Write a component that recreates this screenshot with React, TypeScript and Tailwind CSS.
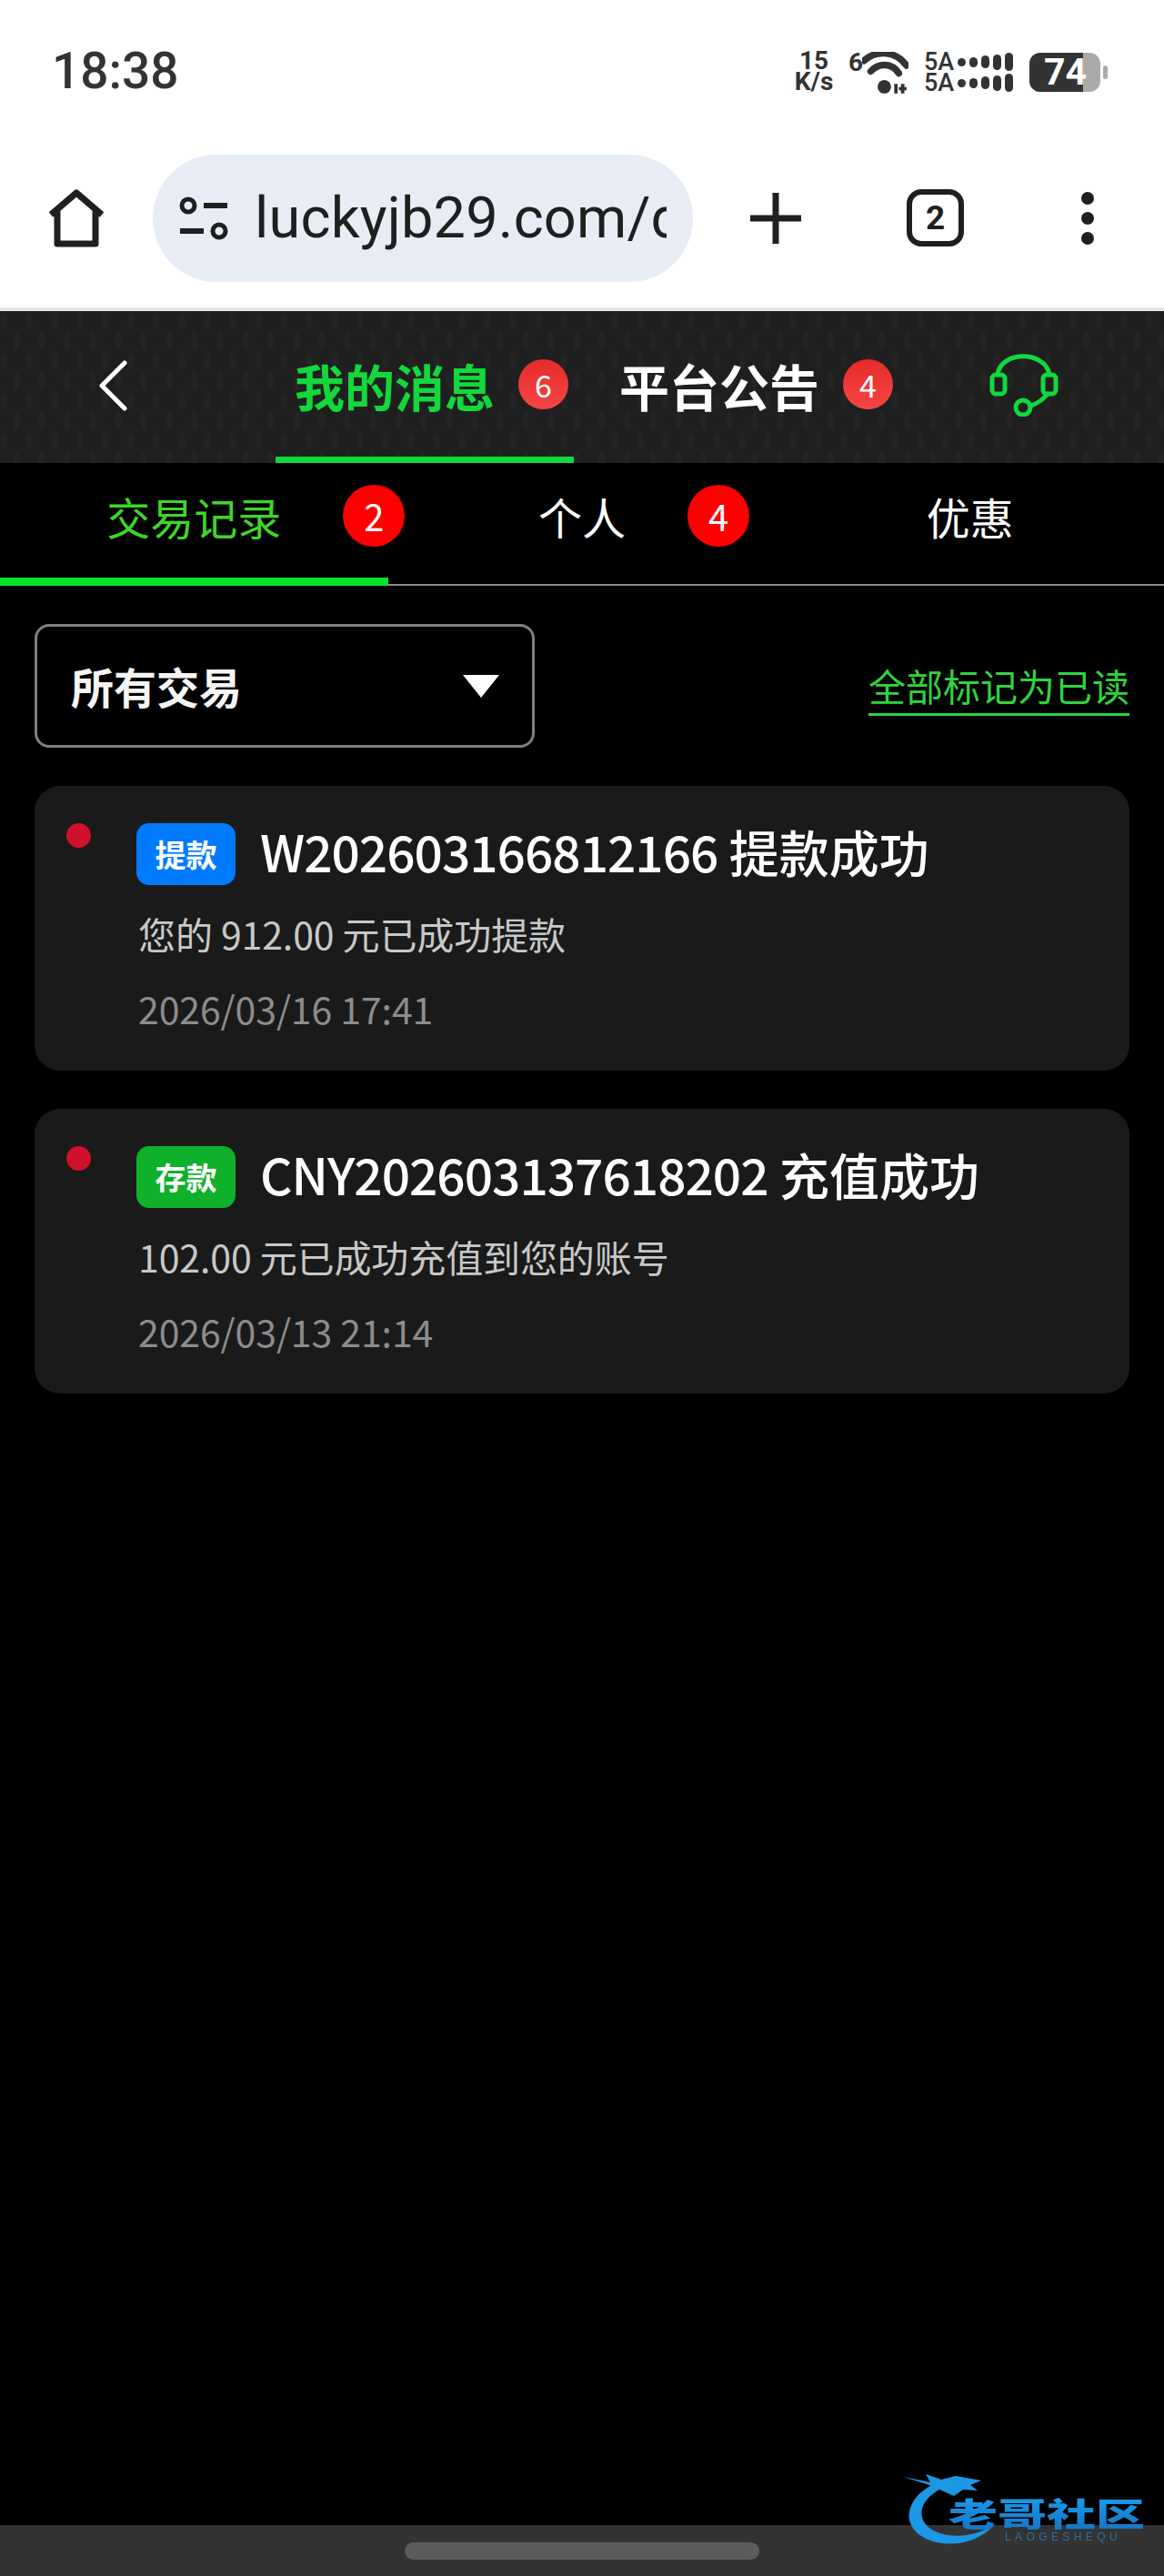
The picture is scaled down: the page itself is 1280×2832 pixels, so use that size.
import React from 'react';

const StatusBar = () => (
  <div className="h-[170px] bg-white flex items-start pt-[50px] pl-[57px] pr-[62px] justify-between text-[#333333]">
    <span className="font-['Roboto',sans-serif] font-medium text-[55px] leading-[56px]">18:38</span>
    <div className="flex items-start font-['Roboto',sans-serif] font-bold">
      <div className="w-[48px] flex flex-col items-center mt-[5px] text-[28px] leading-[23px]">
        <span>15</span>
        <span>K/s</span>
      </div>
      <div className="relative ml-[14px] w-[66px] h-[48px] mt-[6px]">
        <span className="absolute left-0 top-[0px] text-[28px] leading-[26px]">6</span>
        <svg viewBox="0 0 48 44" className="absolute left-[15px] top-[1px] w-[51px] h-[47px]" fill="none" stroke="#333333" strokeLinecap="round">
          <path d="M2 9 C 14 -2, 34 -2, 46 14" strokeWidth="7" />
          <path d="M9 20 C 17 11, 31 11, 38 22" strokeWidth="7" />
          <circle cx="23" cy="36" r="7" fill="#333333" stroke="none" />
          <path d="M35 43 V33 M42 33 V43 M38 38 L46 38" strokeWidth="3.5" strokeLinecap="butt" />
        </svg>
      </div>
      <div className="ml-[17px] flex flex-col gap-[1px] mt-[7px]">
        {[0, 1].map((row) => (
          <div key={row} className="flex items-center h-[22px]">
            <span className="text-[27px] leading-[22px] w-[37px] font-medium">5A</span>
            <div className="flex items-center gap-[4px]">
              <div className="w-[9px] h-[9px] rounded-full bg-[#333333]" />
              <div className="w-[9px] h-[11px] rounded-full bg-[#333333]" />
              <div className="w-[9px] h-[14px] rounded-full bg-[#333333]" />
              <div className="w-[9px] h-[17px] rounded-full bg-[#333333]" />
              <div className="w-[9px] h-[20px] rounded-full bg-[#333333]" />
            </div>
          </div>
        ))}
      </div>
      <div className="ml-[18px] mt-[8px] flex items-center">
        <div className="relative w-[78px] h-[43px] rounded-[12px] bg-[#aaaaaa]">
          <div className="w-[59px] h-full rounded-l-[12px] bg-[#333333]" />
          <span className="absolute left-[16px] top-0 text-[41px] leading-[43px] font-bold text-white">74</span>
        </div>
        <div className="ml-[3px] w-[5px] h-[15px] rounded-full bg-[#aaaaaa]" />
      </div>
    </div>
  </div>
);

const Toolbar = () => (
  <div className="h-[172px] bg-white border-b-[4px] border-[#e2e7ec] flex items-start">
    <svg viewBox="0 0 64 64" className="ml-[52px] mt-[38px] w-[64px] h-[64px] shrink-0" fill="none" stroke="#1f1f1f" strokeWidth="7" strokeLinejoin="round">
      <path d="M4 28 L32 4 L60 28 M11 23 V60 H53 V23" />
    </svg>
    <div className="ml-[52px] w-[594px] h-[140px] rounded-full bg-[#e8edf5] flex items-center pl-[29px] shrink-0">
      <svg viewBox="0 0 54 48" className="w-[54px] h-[48px] shrink-0" fill="none" stroke="#1f1f1f">
        <circle cx="10" cy="10" r="7" strokeWidth="5" />
        <path d="M27 10 H53" strokeWidth="6" />
        <circle cx="44" cy="38" r="7" strokeWidth="5" />
        <path d="M1 38 H27" strokeWidth="6" />
      </svg>
      <div className="ml-[29px] w-[453px] overflow-hidden whitespace-nowrap font-['Roboto',sans-serif] text-[63px] leading-[80px] tracking-[0.2px] text-[#1f1f1f]">
        luckyjb29.com/dashboard
      </div>
    </div>
    <svg viewBox="0 0 56 56" className="ml-[63px] mt-[42px] w-[56px] h-[56px] shrink-0" stroke="#1f1f1f" strokeWidth="7">
      <path d="M0 28 H56 M28 0 V56" />
    </svg>
    <div className="ml-[116px] mt-[38px] w-[63px] h-[63px] rounded-[16px] border-[6px] border-[#1f1f1f] flex items-center justify-center font-['Roboto',sans-serif] font-bold text-[37px] leading-none text-[#1f1f1f] shrink-0">
      2
    </div>
    <div className="ml-[129px] mt-[41px] flex flex-col gap-[8px] shrink-0">
      <div className="w-[14px] h-[14px] rounded-full bg-[#1f1f1f]" />
      <div className="w-[14px] h-[14px] rounded-full bg-[#1f1f1f]" />
      <div className="w-[14px] h-[14px] rounded-full bg-[#1f1f1f]" />
    </div>
  </div>
);

const Header = () => (
  <div className="h-[167px] flex items-stretch bg-[#1f1f1f] bg-[radial-gradient(ellipse_4px_11px_at_4px_11px,#242424_80%,transparent_100%),radial-gradient(ellipse_4px_11px_at_18px_33px,#242424_80%,transparent_100%)] bg-[length:28px_44px]">
    <div className="w-[303px] flex items-center pl-[108px] pb-[3px] shrink-0">
      <svg viewBox="0 0 32 56" className="w-[32px] h-[56px]" fill="none" stroke="#ffffff" strokeWidth="5" strokeLinecap="round" strokeLinejoin="round">
        <path d="M29 3 L4 28 L29 53" />
      </svg>
    </div>
    <div className="w-[328px] border-b-[7px] border-[#0fdc3a] flex items-center pl-[21px] pt-[1px] shrink-0">
      <span className="text-[55px] leading-[70px] font-bold text-[#12d83c]">我的消息</span>
      <span className="ml-[26px] w-[55px] h-[55px] rounded-full bg-gradient-to-b from-[#e62a2a] to-[#f54545] flex items-center justify-center text-[34px] leading-none text-white">6</span>
    </div>
    <div className="flex items-center pl-[50px] border-b-[7px] border-transparent pt-[1px] shrink-0">
      <span className="text-[55px] leading-[70px] font-bold text-white">平台公告</span>
      <span className="ml-[26px] w-[55px] h-[55px] rounded-full bg-gradient-to-b from-[#e62a2a] to-[#f54545] flex items-center justify-center text-[34px] leading-none text-white">4</span>
    </div>
    <div className="flex items-center ml-[106px] pb-[6px]">
      <svg viewBox="0 0 76 70" className="w-[76px] h-[70px]" fill="none" stroke="#12d83c" strokeWidth="5" strokeLinecap="round">
        <path d="M9 24 C 12 -3, 62 -3, 66 24" />
        <rect x="3" y="24" width="14" height="21" rx="4" />
        <rect x="59" y="24" width="14" height="21" rx="4" />
        <circle cx="37" cy="60" r="8" />
        <path d="M45 58 C 53 56, 59 51, 64 45" />
      </svg>
    </div>
  </div>
);

const SubTab = ({ label, badge, active }: { label: string; badge?: number; active?: boolean }) => (
  <div className={`flex-1 flex justify-center pt-[24px] h-[135px] ${active ? 'border-b-[9px] border-[#08e030]' : ''}`}>
    <div className={`relative h-[68px] flex items-center text-[48px] leading-[68px] ${active ? 'text-[#3fd62a]' : 'text-white'}`}>
      {label}
      {badge !== undefined && (
        <span className="absolute left-full top-0 ml-[68px] w-[68px] h-[68px] rounded-full bg-[#ff0000] flex items-center justify-center text-[40px] leading-none text-white">
          {badge}
        </span>
      )}
    </div>
  </div>
);

const Card = ({ tag, tagColor, code, title, desc, date }: { tag: string; tagColor: string; code: string; title: string; desc: string; date: string }) => (
  <div className="h-[313px] rounded-[28px] bg-[#1a1a1a] flex items-start pl-[35px] pt-[41px]">
    <div className="w-[27px] h-[27px] rounded-full bg-[#d0112b] shrink-0" />
    <div className="ml-[50px] flex-1">
      <div className="flex items-center h-[68px]">
        <span className={`w-[109px] h-[68px] rounded-[14px] flex items-center justify-center text-[34px] leading-none font-bold text-white ${tagColor}`}>
          {tag}
        </span>
        <span className="ml-[27px] -mt-[8px] text-[55px] leading-[68px] font-medium text-white whitespace-nowrap">
          <span className="tracking-[-1px]">{code}</span> {title}
        </span>
      </div>
      <div className="mt-[25px] pl-[2px] text-[41px] leading-[56px] tracking-[-0.1px] text-[#c8c8c8]">{desc}</div>
      <div className="mt-[26px] pl-[2px] text-[41px] leading-[56px] tracking-[-0.1px] text-[#8c8c8c]">{date}</div>
    </div>
  </div>
);

const Logo = () => (
  <div className="absolute right-[22px] bottom-0 w-[265px] h-[120px] blur-[0.7px]">
    <svg viewBox="0 0 265 120" className="absolute inset-0 w-full h-full" fill="none">
      <path d="M32 20 C 4 34, -2 62, 20 76 C 42 90, 80 88, 102 62 C 82 78, 48 80, 30 68 C 14 56, 18 36, 42 24 Z" fill="#1c97e6" />
      <path d="M0 11 L30 17 L25 8 L42 14 L58 10 L86 15 L74 20 L82 26 L66 25 L56 32 L38 24 L26 19 Z" fill="#1c97e6" />
    </svg>
    <span className="absolute left-[50px] top-[22px] scale-y-[0.68] text-[54px] leading-[56px] font-black whitespace-nowrap bg-gradient-to-b from-[#1a9cf0] to-[#1577c4] bg-clip-text text-transparent">
      老哥社区
    </span>
    <span className="absolute left-[112px] top-[71px] font-['Liberation_Sans',sans-serif] text-[12px] leading-[12px] tracking-[4.4px] whitespace-nowrap text-[#2d6f9e]">
      LAOGESHEQU
    </span>
  </div>
);

export default function App() {
  return (
    <div className="relative min-h-[2832px] flex flex-col bg-black font-['Noto_Sans_CJK_SC','Noto_Sans',sans-serif]">
      <StatusBar />
      <Toolbar />
      <Header />
      <div className="flex border-b-[2px] border-[#8a8a8a] h-[135px]">
        <SubTab label="交易记录" badge={2} active />
        <SubTab label="个人" badge={4} />
        <SubTab label="优惠" />
      </div>

      <div className="flex-1 px-[38px]">
        <div className="mt-[42px] flex items-center justify-between">
          <div className="w-[550px] h-[136px] rounded-[16px] border-[3px] border-[#808080] flex items-center justify-between pl-[37px] pr-[36px]">
            <span className="text-[47px] leading-[60px] font-bold text-[#f5f5f5]">所有交易</span>
            <div className="w-0 h-0 border-x-[20px] border-x-transparent border-t-[25px] border-t-white" />
          </div>
          <span className="text-[41px] leading-[58px] pb-[2px] mt-[3px] text-[#2fd43f] border-b-[3px] border-[#2fd43f]">全部标记为已读</span>
        </div>
        <div className="mt-[42px] flex flex-col gap-[42px]">
          <Card tag="提款" tagColor="bg-[#007bff]" code="W202603166812166" title="提款成功" desc="您的 912.00 元已成功提款" date="2026/03/16 17:41" />
          <Card tag="存款" tagColor="bg-[#0fb02a]" code="CNY202603137618202" title="充值成功" desc="102.00 元已成功充值到您的账号" date="2026/03/13 21:14" />
        </div>
      </div>

      <div className="h-[56px] bg-[#333333] flex justify-center pt-[19px]">
        <div className="w-[390px] h-[19px] rounded-full bg-[#5c5c5c]" />
      </div>
      <Logo />
    </div>
  );
}
